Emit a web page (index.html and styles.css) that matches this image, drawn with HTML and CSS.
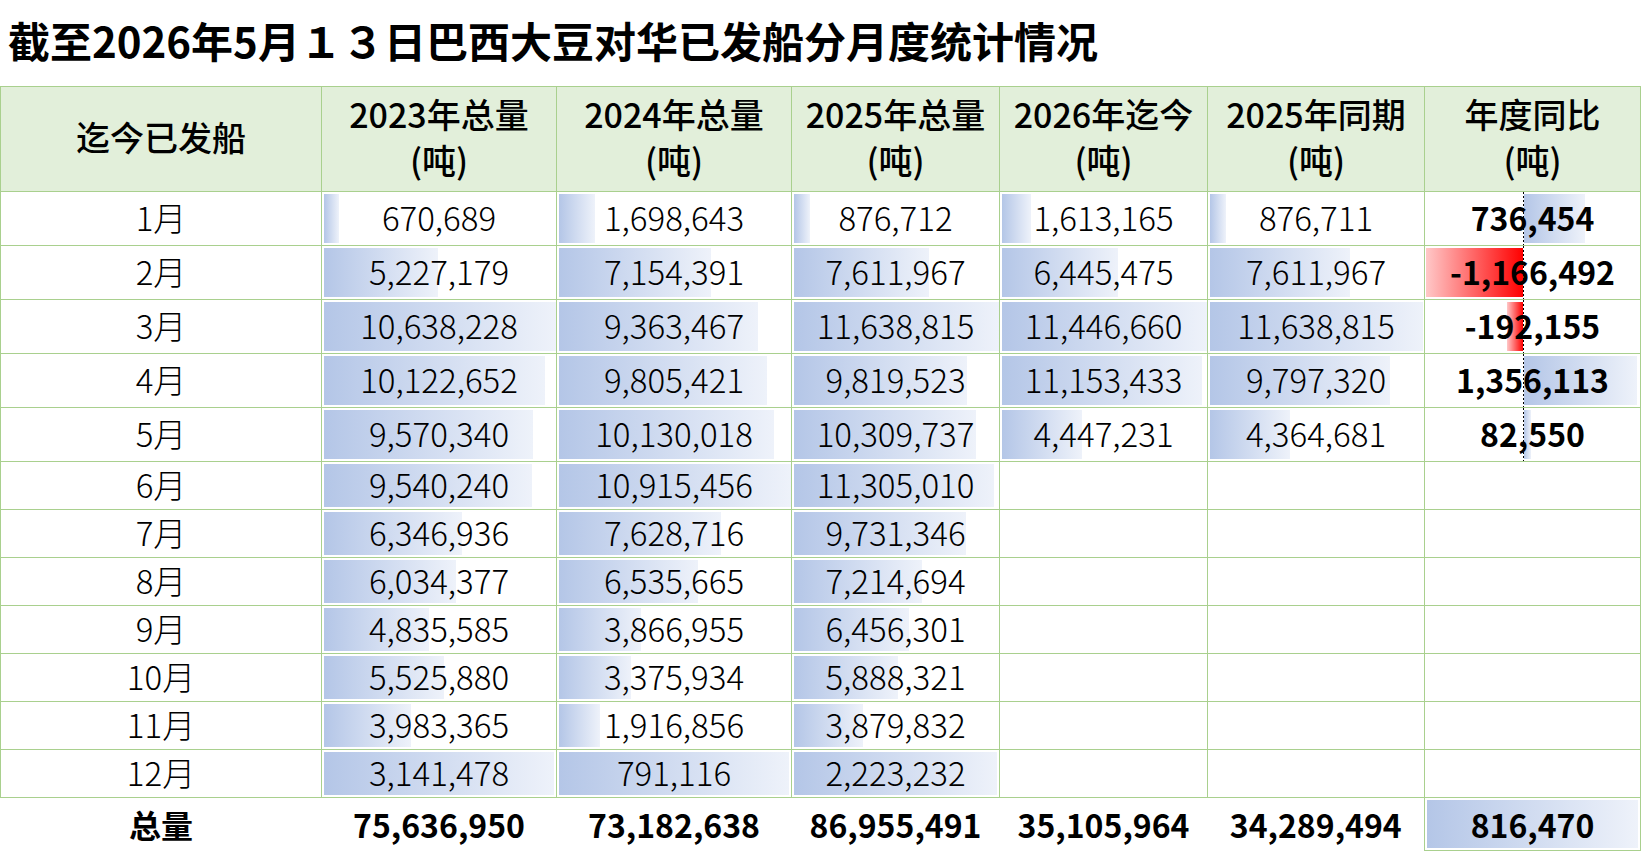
FILE: index.html
```html
<!DOCTYPE html>
<html lang="zh-CN">
<head>
<meta charset="utf-8">
<title>巴西大豆对华已发船分月度统计情况</title>
<link rel="stylesheet" href="styles.css">
</head>
<body>
<h1 class="title">截至2026年5月１３日巴西大豆对华已发船分月度统计情况</h1>
<table class="sheet">
  <colgroup>
    <col class="c-month"><col class="c-y23"><col class="c-y24"><col class="c-y25"><col class="c-y26"><col class="c-same"><col class="c-yoy">
  </colgroup>
  <thead>
    <tr class="head">
      <th>迄今已发船</th>
      <th>2023年总量<br>(吨)</th>
      <th>2024年总量<br>(吨)</th>
      <th>2025年总量<br>(吨)</th>
      <th>2026年迄今<br>(吨)</th>
      <th>2025年同期<br>(吨)</th>
      <th>年度同比<br>(吨)</th>
    </tr>
  </thead>
  <tbody>
    <tr class="tall">
      <td>1月</td>
      <td class="bar" style="--w:15px">670,689</td>
      <td class="bar" style="--w:36px">1,698,643</td>
      <td class="bar" style="--w:16px">876,712</td>
      <td class="bar" style="--w:29px">1,613,165</td>
      <td class="bar" style="--w:16px">876,711</td>
      <td class="yoy pos" style="--w:61px">736,454</td>
    </tr>
    <tr class="tall">
      <td>2月</td>
      <td class="bar" style="--w:114px">5,227,179</td>
      <td class="bar" style="--w:152px">7,154,391</td>
      <td class="bar" style="--w:135px">7,611,967</td>
      <td class="bar" style="--w:116px">6,445,475</td>
      <td class="bar" style="--w:140px">7,611,967</td>
      <td class="yoy neg" style="--w:97px">-1,166,492</td>
    </tr>
    <tr class="tall">
      <td>3月</td>
      <td class="bar" style="--w:232px">10,638,228</td>
      <td class="bar" style="--w:199px">9,363,467</td>
      <td class="bar" style="--w:205px">11,638,815</td>
      <td class="bar" style="--w:205px">11,446,660</td>
      <td class="bar" style="--w:213px">11,638,815</td>
      <td class="yoy neg" style="--w:16px">-192,155</td>
    </tr>
    <tr class="tall">
      <td>4月</td>
      <td class="bar" style="--w:221px">10,122,652</td>
      <td class="bar" style="--w:208px">9,805,421</td>
      <td class="bar" style="--w:173px">9,819,523</td>
      <td class="bar" style="--w:200px">11,153,433</td>
      <td class="bar" style="--w:180px">9,797,320</td>
      <td class="yoy pos" style="--w:113px">1,356,113</td>
    </tr>
    <tr class="tall">
      <td>5月</td>
      <td class="bar" style="--w:209px">9,570,340</td>
      <td class="bar" style="--w:215px">10,130,018</td>
      <td class="bar" style="--w:182px">10,309,737</td>
      <td class="bar" style="--w:80px">4,447,231</td>
      <td class="bar" style="--w:80px">4,364,681</td>
      <td class="yoy pos" style="--w:7px">82,550</td>
    </tr>
    <tr>
      <td>6月</td>
      <td class="bar" style="--w:208px">9,540,240</td>
      <td class="bar" style="--w:232px">10,915,456</td>
      <td class="bar" style="--w:200px">11,305,010</td>
      <td></td><td></td><td></td>
    </tr>
    <tr>
      <td>7月</td>
      <td class="bar" style="--w:138px">6,346,936</td>
      <td class="bar" style="--w:162px">7,628,716</td>
      <td class="bar" style="--w:172px">9,731,346</td>
      <td></td><td></td><td></td>
    </tr>
    <tr>
      <td>8月</td>
      <td class="bar" style="--w:132px">6,034,377</td>
      <td class="bar" style="--w:139px">6,535,665</td>
      <td class="bar" style="--w:128px">7,214,694</td>
      <td></td><td></td><td></td>
    </tr>
    <tr>
      <td>9月</td>
      <td class="bar" style="--w:105px">4,835,585</td>
      <td class="bar" style="--w:82px">3,866,955</td>
      <td class="bar" style="--w:115px">6,456,301</td>
      <td></td><td></td><td></td>
    </tr>
    <tr>
      <td>10月</td>
      <td class="bar" style="--w:120px">5,525,880</td>
      <td class="bar" style="--w:72px">3,375,934</td>
      <td class="bar" style="--w:104px">5,888,321</td>
      <td></td><td></td><td></td>
    </tr>
    <tr>
      <td>11月</td>
      <td class="bar" style="--w:87px">3,983,365</td>
      <td class="bar" style="--w:41px">1,916,856</td>
      <td class="bar" style="--w:69px">3,879,832</td>
      <td></td><td></td><td></td>
    </tr>
    <tr>
      <td>12月</td>
      <td class="bar full">3,141,478</td>
      <td class="bar full">791,116</td>
      <td class="bar full">2,223,232</td>
      <td></td><td></td><td></td>
    </tr>
  </tbody>
  <tfoot>
    <tr class="total">
      <td>总量</td>
      <td>75,636,950</td>
      <td>73,182,638</td>
      <td>86,955,491</td>
      <td>35,105,964</td>
      <td>34,289,494</td>
      <td class="bar full boxed">816,470</td>
    </tr>
  </tfoot>
</table>
</body>
</html>
```

FILE: styles.css
```css
html, body {
  margin: 0;
  padding: 0;
  background: #ffffff;
}

body {
  font-family: "Noto Sans CJK SC", "Noto Sans", sans-serif;
  color: #000000;
}

.title {
  margin: 0;
  height: 78px;
  padding: 0 0 8px 8px;
  display: flex;
  align-items: center;
  font-size: 42px;
  font-weight: 700;
  letter-spacing: 0;
}

.sheet {
  border-collapse: collapse;
  table-layout: fixed;
  width: 1640px;
}

.c-month { width: 321px; }
.c-y23 { width: 235px; }
.c-y24 { width: 235px; }
.c-y25 { width: 208px; }
.c-y26 { width: 208px; }
.c-same { width: 217px; }
.c-yoy { width: 216px; }

.sheet th,
.sheet td {
  border: 1px solid #a9d08e;
  padding: 0;
  text-align: center;
  vertical-align: middle;
  white-space: nowrap;
}

.head th {
  height: 100px;
  padding-bottom: 4px;
  background: #e2efda;
  font-size: 34px;
  font-weight: 500;
  line-height: 46px;
}

.sheet tbody td {
  height: 44px;
  padding-bottom: 3px;
  font-size: 33px;
  line-height: 40px;
  font-weight: 300;
}

.sheet tbody tr.tall td {
  height: 50px;
}

.bar {
  --w: 100%;
  background-image: linear-gradient(to right, #b4c6e7, #eef2fa);
  background-repeat: no-repeat;
  background-size: var(--w) calc(100% - 4px);
  background-position: 2px 2px;
}

.bar.full {
  --w: calc(100% - 4px);
}

.sheet tbody td.yoy {
  --axis: 98px;
  font-weight: 700;
  font-size: 32px;
  background-repeat: no-repeat;
}

.yoy.pos {
  background-image:
    repeating-linear-gradient(to bottom, #000 0 2px, transparent 2px 4px),
    linear-gradient(to right, #b4c6e7, #eef2fa);
  background-size: 1px 100%, var(--w) calc(100% - 4px);
  background-position: var(--axis) 0, calc(var(--axis) + 1px) 2px;
}

.yoy.neg {
  background-image:
    repeating-linear-gradient(to bottom, #000 0 2px, transparent 2px 4px),
    linear-gradient(to right, #ffc8c8, #ff0000);
  background-size: 1px 100%, var(--w) calc(100% - 4px);
  background-position: var(--axis) 0, calc(var(--axis) - var(--w)) 2px;
}

.total td {
  border: none;
  height: 52px;
  font-size: 32px;
  line-height: 40px;
  font-weight: 700;
}

.total td.boxed {
  border: 1px solid #a9d08e;
}
```
